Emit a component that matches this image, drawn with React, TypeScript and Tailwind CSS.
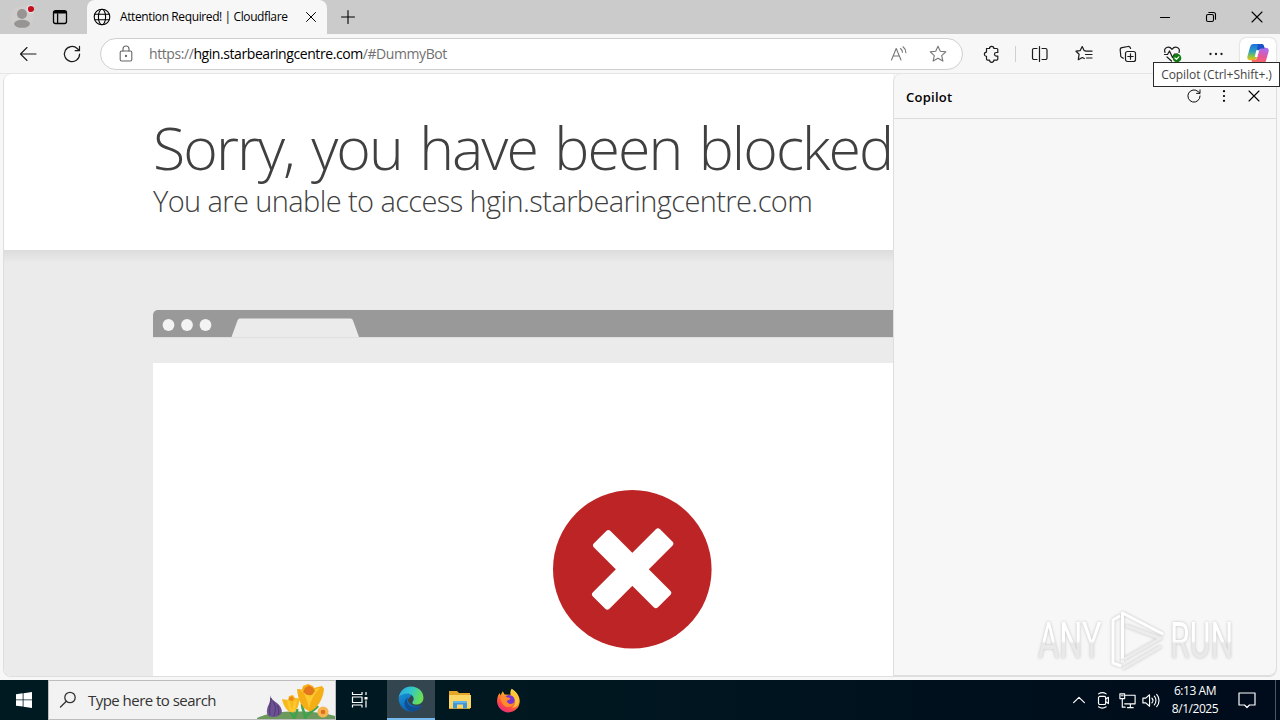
import React from 'react';
import clsx from 'clsx';

type IconProps = {
    size?: number;
    className?: string;
    strokeWidth?: number;
    children: React.ReactNode;
};

// 20 x 20 line icon
const Icon = ({ size = 20, className, strokeWidth = 1.1, children }: IconProps) => (
    <svg
        width={size}
        height={size}
        viewBox="0 0 20 20"
        fill="none"
        stroke="currentColor"
        strokeWidth={strokeWidth}
        strokeLinecap="round"
        strokeLinejoin="round"
        className={clsx('shrink-0', className)}
    >
        {children}
    </svg>
);

const RefreshIcon = ({ size = 20 }: { size?: number }) => (
    <Icon size={size} strokeWidth={1.2}>
        <path d="M17.6 10a7.6 7.6 0 1 1-2.4-5.5L17.4 6.6M17.5 2.4v4.3h-4.3" />
    </Icon>
);

const CloseIcon = ({ size = 20 }: { size?: number }) => (
    <Icon size={size}>
        <path d="M5 5l10 10M15 5L5 15" />
    </Icon>
);

const TabStrip = () => (
    <div className="flex h-[34px] bg-[#cbcbcb] text-black">
        <div className="flex w-[44px] items-center justify-center">
            <svg width="24" height="24" viewBox="0 0 24 24">
                <circle cx="12" cy="12" r="11.5" fill="#d0cecd" />
                <circle cx="12" cy="9" r="5" fill="#979491" />
                <ellipse cx="12" cy="18.8" rx="8" ry="4" fill="#979491" />
                <circle cx="21" cy="4" r="4.6" fill="#dedede" />
                <circle cx="21" cy="4" r="3.1" fill="#c50f1f" />
            </svg>
        </div>
        <div className="flex w-[32px] items-center justify-center">
            <Icon strokeWidth={1.3}>
                <rect x="3.5" y="3.7" width="13" height="12.8" rx="2" />
                <path d="M4.5 5.2h11" strokeWidth={2.4} />
                <path d="M7.6 7v9" />
            </Icon>
        </div>
        <div className="ml-[11px] flex w-[240px] items-center rounded-t-lg bg-[#f7f7f7]">
            <Icon className="ml-[5px]">
                <circle cx="10" cy="10" r="7.8" />
                <ellipse cx="10" cy="10" rx="3.6" ry="7.8" />
                <path d="M2.8 7.2h14.4M2.8 12.8h14.4" />
            </Icon>
            <span className="ml-[8px] w-[182px] text-[12px] tracking-[-0.390px] whitespace-nowrap">Attention Required! | Cloudflare</span>
            <CloseIcon size={18} />
        </div>
        <div className="flex w-[42px] items-center justify-center">
            <Icon>
                <path d="M10 3.5v13M3.5 10h13" />
            </Icon>
        </div>
        <div className="ml-auto flex">
            <div className="flex w-[46px] items-center justify-center">
                <Icon>
                    <path d="M5.5 10.5h9" />
                </Icon>
            </div>
            <div className="flex w-[46px] items-center justify-center">
                <Icon>
                    <rect x="5.5" y="7.5" width="7" height="7" rx="1.5" />
                    <path d="M7.8 5.5h4.7a2 2 0 0 1 2 2v4.7" />
                </Icon>
            </div>
            <div className="flex w-[46px] items-center justify-center">
                <CloseIcon />
            </div>
        </div>
    </div>
);

const CopilotLogo = () => (
    <svg width="24" height="24" viewBox="0 0 24 24">
        <defs>
            <linearGradient id="cpA" x1="0" y1="0" x2="0" y2="1">
                <stop offset="0" stopColor="#1b6fe0" />
                <stop offset="0.45" stopColor="#2f9fc0" />
                <stop offset="0.75" stopColor="#8bc34a" />
                <stop offset="1" stopColor="#f2c10f" />
            </linearGradient>
            <linearGradient id="cpB" x1="0.6" y1="0" x2="0.3" y2="1">
                <stop offset="0" stopColor="#a86cf0" />
                <stop offset="0.5" stopColor="#e8559a" />
                <stop offset="1" stopColor="#ff6d4a" />
            </linearGradient>
        </defs>
        <path d="M7.5 2h8c1.4 0 2 .8 2.4 2l.7 2.5h-3c-1.5 0-2.3.8-2.7 2.2l-1.9 6.6c-.6 2-1.6 3-3.5 3H4.3C2 18.3.8 17 1.4 14.6L4 5.3C4.7 3 5.7 2 7.5 2z" fill="url(#cpA)" />
        <path d="M16.5 22h-8c-1.4 0-2-.8-2.4-2l-.7-2.3h2.9c1.6 0 2.5-.9 2.9-2.3l1.9-6.5c.6-2 1.6-3.1 3.5-3.1h3.1c2.3 0 3.5 1.4 2.9 3.7L20 18.7c-.7 2.3-1.7 3.3-3.5 3.3z" fill="url(#cpB)" />
        <path d="M12 2h3.5c1.4 0 2 .8 2.4 2l.7 2.5h-3c-1.5 0-2.3.8-2.7 2.2L11 7z" fill="#1c50c8" />
        <path d="M10.300 8.200h2.700l-1.800 6.800H8.800z" fill="white" />
    </svg>
);

const Toolbar = () => (
    <div className="flex h-[39px] items-center bg-[#f7f7f7] text-[#1b1b1b]">
        <div className="flex w-[44px] justify-center pl-3">
            <Icon>
                <path d="M18 10H2.5M9 3.5L2.5 10 9 16.5" />
            </Icon>
        </div>
        <div className="flex w-[56px] justify-center">
            <RefreshIcon />
        </div>
        <div className="mt-[1px] flex h-[32px] w-[863px] items-center rounded-full border border-[#cfcfcf] bg-white">
            <Icon className="ml-[15px] text-[#666]">
                <rect x="4.2" y="7" width="11.6" height="10" rx="1.5" />
                <path d="M7 7V5a3 3 0 0 1 6 0v2" />
                <circle cx="10" cy="12" r=".6" fill="currentColor" />
            </Icon>
            <span className="ml-[13px] pb-[1px] text-[14px] tracking-[-0.420px] text-[#717171]">
                https://<span className="text-black">hgin.starbearingcentre.com</span>/#DummyBot
            </span>
            <div className="mr-[14px] ml-auto flex gap-[19px] text-[#777]">
                <Icon>
                    <path d="M2.5 16L7.2 4.5 12 16M4.2 12h6M11.5 4.5c1.2.9 1.9 2.1 2 3.8M14 2.8c1.9 1.5 2.8 3.5 2.9 6" />
                </Icon>
                <Icon>
                    <path d="M10 2.3l2.3 5 5.5.6-4.1 3.7 1.2 5.5L10 14.3l-4.9 2.8 1.2-5.5L2.2 7.9l5.5-.6z" />
                </Icon>
            </div>
        </div>
        <div className="ml-[7px] flex w-[43px] justify-center">
            <Icon strokeWidth={1.2}>
                <path d="M4.5 4.5h3a2.2 2.2 0 0 1 4.4 0h2.9a1 1 0 0 1 1 1v3h-1.5a1.8 1.8 0 0 0 0 3.6h1.5v3a1 1 0 0 1-1 1h-2.9a2.2 2.2 0 0 1-4.4 0H5.500a1 1 0 0 1-1-1v-2.800a2.100 2.100 0 0 1 0-4.200z" />
            </Icon>
        </div>
        <div className="mx-[2px] h-[16px] w-px bg-[#d0d0d0]" />
        <div className="flex w-[44px] justify-center">
            <Icon strokeWidth={1.2}>
                <path d="M9.5 2.5v15M7 4.5H4A1.5 1.5 0 0 0 2.5 6v8A1.5 1.5 0 0 0 4 15.5h3M12 4.5h3.5A1.5 1.5 0 0 1 17 6v8a1.5 1.5 0 0 1-1.500 1.500H12" />
            </Icon>
        </div>
        <div className="flex w-[44px] justify-center">
            <Icon strokeWidth={1.2}>
                <path d="M11.4 6.8L10.1 6.6 8.2 2.5 6.2 6.6 2 7.2l3.1 3-.8 5.5 4-2.2 2 1M12 7.2h6M11.5 10.5H18M12.5 14H18" />
            </Icon>
        </div>
        <div className="flex w-[44px] justify-center">
            <Icon strokeWidth={1.2}>
                <rect x="7.5" y="7.5" width="10" height="10" rx="2" />
                <path d="M12.5 9.8v5.4M9.8 12.5h5.4M5.3 14.3l-1.7-1A2 2 0 0 1 2.7 11L2.2 6A2.2 2.2 0 0 1 4 3.6l6-1.1c1.4-.2 2.3.6 2.6 2" />
            </Icon>
        </div>
        <div className="flex w-[44px] justify-center">
            <Icon strokeWidth={1.2}>
                <path d="M3 8.5C1.2 3.4 7 1.2 10 5.3c3-4.1 8.8-1.9 7 3.2M2.5 10.5h3L7.5 7l3 6.5 2-3.5h3M5 13l4.5 4" />
                <circle cx="15" cy="14" r="4.3" fill="#107c10" stroke="none" />
                <path d="M13 14l1.4 1.4 2.4-2.6" stroke="white" />
            </Icon>
        </div>
        <div className="flex w-[44px] justify-center">
            <Icon>
                <g fill="currentColor" stroke="none">
                    <circle cx="4.5" cy="10" r="1.15" />
                    <circle cx="10" cy="10" r="1.15" />
                    <circle cx="15.5" cy="10" r="1.15" />
                </g>
            </Icon>
        </div>
        <div className="ml-[2px] flex h-[32px] w-[36px] items-center justify-center rounded-md bg-white shadow-[0_0_2px_rgba(0,0,0,0.25)]">
            <CopilotLogo />
        </div>
    </div>
);

const BlockedPage = () => (
    <div className="flex w-[889px] flex-col overflow-hidden rounded-l-lg bg-[#ebebeb]">
        <div className="h-[176px] bg-white pt-[34px] pl-[149px] font-light whitespace-nowrap text-[#404040]">
            <h1 className="h-[78px] text-[59px] leading-[78px] tracking-[-1.950px] [word-spacing:4px]">Sorry, you have been blocked</h1>
            <h2 className="h-[30px] text-[29px] leading-[30px] tracking-[-0.600px]">You are unable to access hgin.starbearingcentre.com</h2>
        </div>
        <div className="h-[13px] shrink-0 bg-linear-to-b from-[#dcdcdc] to-[#ebebeb]" />
        <div className="mt-[47px] ml-[149px] flex h-[27px] shrink-0 rounded-tl-[5px] bg-[#999]">
            <svg width="210" height="27" viewBox="0 0 210 27">
                <circle cx="15.5" cy="15" r="5.9" fill="#f3f3f3" />
                <circle cx="34" cy="15" r="5.9" fill="#f3f3f3" />
                <circle cx="52.5" cy="15" r="5.9" fill="#f3f3f3" />
                <path d="M78.5 27L84.5 10.5Q85.2 8.5 87 8.5H197.5Q199.3 8.5 200 10.5L206 27z" fill="#ebebeb" />
            </svg>
        </div>
        <div className="ml-[149px] h-px shrink-0 bg-[#dfdfdf]" />
        <div className="mt-[25px] ml-[149px] flex-1 bg-white pt-[127px] pl-[400px]">
            <svg width="159" height="159" viewBox="0 0 159 159">
                <circle cx="79.3" cy="79.3" r="79.3" fill="#bd2426" />
                <g transform="translate(79.3 79.3) rotate(45)" fill="white">
                    <rect x="-45.5" y="-11.7" width="90.5" height="23.4" rx="3" />
                    <rect x="-11.7" y="-48" width="23.4" height="95" rx="3" />
                </g>
            </svg>
        </div>
    </div>
);

const Watermark = () => (
    <div className="flex h-[64px] w-[196px] items-center justify-between pt-[2px] text-[50px] leading-none drop-shadow-[0_0_1.500px_rgba(0,0,0,0.22)]">
        <span className="flex w-[66px] items-center">
            <span className="origin-left scale-x-[0.65] bg-linear-to-b from-white from-50% to-[#e9e9e9] to-55% bg-clip-text font-[Roboto] text-transparent">ANY</span>
        </span>
        <svg width="58" height="64" viewBox="0 0 58 64" fill="none" strokeLinejoin="round" strokeLinecap="round" className="shrink-0">
            <path d="M11 7.5L5 11v43l7 2.5M14.5 52V4L54 24.5" stroke="#fff" strokeWidth="3" />
            <path d="M19 17l32 12M14.5 51L53 29M16 59l36-21" stroke="#ececec" strokeWidth="3" />
        </svg>
        <span className="flex w-[64px] items-center">
            <span className="origin-left scale-x-[0.64] bg-linear-to-b from-white from-50% to-[#e9e9e9] to-55% bg-clip-text font-[Roboto] text-transparent">RUN</span>
        </span>
    </div>
);

const CopilotPane = () => (
    <div className="flex w-[384px] flex-col rounded-r-lg rounded-tl-lg border-x border-b border-[#dedede] bg-[#f7f7f7]">
        <div className="flex h-[45px] items-center border-b border-[#dcdcdc] pl-[12px] text-black">
            <span className="pt-[3px] text-[13px] font-semibold tracking-[0.250px]">Copilot</span>
            <div className="ml-auto flex items-center pr-[7px]">
                <div className="flex w-[30px] justify-center"><RefreshIcon size={16} /></div>
                <div className="flex w-[30px] justify-center">
                    <Icon size={16}>
                        <g fill="currentColor" stroke="none">
                            <circle cx="10" cy="4" r="1.4" />
                            <circle cx="10" cy="10" r="1.4" />
                            <circle cx="10" cy="16" r="1.4" />
                        </g>
                    </Icon>
                </div>
                <div className="flex w-[30px] justify-center"><CloseIcon /></div>
            </div>
        </div>
        <div className="mt-auto mb-[3px] ml-[144px]">
            <Watermark />
        </div>
    </div>
);

const Flowers = () => (
    <svg width="78" height="38" viewBox="0 0 78 38" className="ml-auto shrink-0">
        <path d="M-2 38C10 32 22 30.5 40 30.5S68 32 78 35v3z" fill="#6b9a5c" />
        <path d="M37 38c1-4 4-6 3-10M34 31c1 3 3 4 3 7M48 38c0-5 8-7 13-13M45 23c0 6 3 8 3 14" stroke="#3fa34d" strokeWidth="2.6" fill="none" />
        <path d="M13.5 14c0 4 4 6 7 8.5 4 3.5 5.5 8 3.5 10.5-3 3-10 4-13 1.5-2-3-1-8 1-11.5 1.5-3 1-6 1.5-9z" fill="#6d5192" />
        <path d="M14 17c-.5 7-2 11-1 17M16 20c3 5 3 10 1 15M20 24c2 4 2 7 1 10" stroke="#4b3a70" fill="none" />
        <path d="M25 18l6 1 1-4 4-1 2 3 4.5.5c-.5 7-2.5 12-6.5 14-7-1-9.5-7-11-13.5z" fill="#f7b91c" />
        <path d="M30 18.5l3 2 2 9 2-9 3-2-2 11-3 2-3-3z" fill="#fcc92f" />
        <path d="M32 17l3-2 2 3-2 2-3-1z" fill="#ea861f" />
        <path d="M40 8l5 .5 1-3.5 5-2 5 2 1 2 8-2 2 3c-1 10-6 19-14 22.5-9-3-12-12-13-22.5z" fill="#f5ae15" />
        <path d="M43 9c5 3 7 9 9 19 2-9 5-15 11-21-5 0-8 3-10 9-2-4-5-7-10-7z" fill="#fcc92f" />
        <path d="M48 7l4-2.500 4 2.500 2 3-3 4h-5l-4-3z" fill="#e4761b" />
        <circle cx="66" cy="31" r="5.6" fill="#f7b452" />
        <circle cx="66" cy="31" r="2.3" fill="#dd701a" />
    </svg>
);

const EdgeLogo = () => (
    <svg width="26" height="26" viewBox="0 0 24 24">
        <defs>
            <linearGradient id="edgeTop" x1="0" y1="0" x2="1" y2="0.3">
                <stop offset="0" stopColor="#2aa5e8" />
                <stop offset="0.5" stopColor="#30c5ce" />
                <stop offset="1" stopColor="#67df56" />
            </linearGradient>
            <linearGradient id="edgeBody" x1="0" y1="0" x2="0.7" y2="1">
                <stop offset="0" stopColor="#1698dd" />
                <stop offset="1" stopColor="#0b56a8" />
            </linearGradient>
        </defs>
        <path d="M.6 11C.6 18 5.5 23.5 12 23.5c4.5 0 8-2 10-5.3-.5-.6-2 .5-4 .5C13 18.7 9 16 9 12.5L13 8 6 5z" fill="url(#edgeBody)" />
        <path d="M.6 11C1.5 4.5 6.3.5 12 .5c6.8 0 11.5 4.7 11.5 10.3 0 4-3 6.3-6.3 6.3-2.6 0-4-.8-4-1.7 0-.8 1.3-1.4 1.3-3.4 0-2.7-2.7-5-6.2-5C5 7 2 8.5.6 11z" fill="url(#edgeTop)" />
        <path d="M9 10.5c-2.5 6 2.5 11.5 13 7.7-3.2 5.3-10 6.5-13.5 3-3.5-3.5-3-8.2.5-10.7z" fill="#124c91" />
    </svg>
);

const FolderIcon = () => (
    <svg width="24" height="22" viewBox="0 0 24 22">
        <path d="M1 3.5V2h8l2 2h11v16H1z" fill="#e6a629" />
        <path d="M1 6h22v13H1z" fill="#fbd665" />
        <path d="M5 19.5v-7.500h14v7.500h-4v-4H9v4z" fill="#3f97d9" />
        <path d="M5 12h14v2H5z" fill="#62b5e8" />
    </svg>
);

const FirefoxLogo = () => (
    <svg width="25" height="25" viewBox="0 0 24 24">
        <defs>
            <linearGradient id="fox" x1="0.8" y1="0" x2="0.25" y2="1">
                <stop offset="0" stopColor="#fff04a" />
                <stop offset="0.4" stopColor="#ffa02c" />
                <stop offset="0.7" stopColor="#ff4b43" />
                <stop offset="1" stopColor="#e62a82" />
            </linearGradient>
        </defs>
        <path d="M15 .8c4 2.5 7.8 6.5 7.8 11.9A11 11 0 0 1 12 23.5 11 11 0 0 1 1 12.5C1 9 2.2 6.5 3.5 4.8l.7 2.4L6.5 3l1.7 3.2 5.8.3c-.5-2.2-.2-4 1-5.7z" fill="url(#fox)" />
        <circle cx="12.5" cy="12" r="5.4" fill="#7a35cf" />
        <path d="M4.5 8.5c3-2 5-.8 6.3.7l3 .3c-.4 2-2.4 2-3.4 3 1 3.3 4.5 3.5 7.1 1.5-1 4.5-7.5 6-10.800 1.800C4.700 13.200 4.300 10.700 4.500 8.500z" fill="#ff8b2b" />
        <path d="M16.5 8c3 3 3 8.5-1 11 5-.8 6.500-4 6.300-8-.5-4-3-6.500-6.300-8.500-.6 2 .2 4 1 5.500z" fill="#ffc33a" />
    </svg>
);

const Taskbar = () => (
    <div className="flex h-[40px] bg-linear-to-r from-[#001a22] via-[#001720] via-45% to-[#000b1b] text-white">
        <div className="flex w-[48px] items-center justify-center">
            <svg width="16" height="16" viewBox="0 0 16 16" fill="white">
                <path d="M0 2.2L6.7 1.3V7.5H0zM7.5 1.2L16 0v7.5H7.5zM0 8.3h6.7v6.3L0 13.7zM7.5 8.3H16V16l-8.5-1.2z" />
            </svg>
        </div>
        <div className="flex w-[288px] items-center border border-[#bdbdbd] bg-[#f2f2f2] text-[#333]">
            <Icon className="ml-[9px]" strokeWidth={1.3}>
                <circle cx="12" cy="7.5" r="5.2" />
                <path d="M8.3 11.3L2.5 17" />
            </Icon>
            <span className="ml-[10px] text-[15px] tracking-[-0.530px] whitespace-nowrap">Type here to search</span>
            <Flowers />
        </div>
        <div className="flex w-[48px] items-center justify-center">
            <Icon strokeWidth={1.2}>
                <path d="M2.5 2v2.5h9.500V2M2.500 17.500V15h9.500v2.500M2.500 7h9.500v5.500H2.500zM16 2v3M16 10.500v7" strokeLinecap="butt" />
                <path d="M14.5 7h3v2.5h-3z" fill="currentColor" stroke="none" />
            </Icon>
        </div>
        <div className="ml-[3px] flex w-[48px] items-center justify-center border-b-2 border-[#76b9ed] bg-[#334650]">
            <EdgeLogo />
        </div>
        <div className="flex w-[49px] items-center justify-center"><FolderIcon /></div>
        <div className="flex w-[49px] items-center justify-center"><FirefoxLogo /></div>
        <div className="ml-auto flex items-center">
            <Icon size={18} className="mr-[6px]" strokeWidth={1.3}>
                <path d="M4 13l6-6 6 6" />
            </Icon>
            <Icon size={18} className="mr-[6px]" strokeWidth={1.3}>
                <rect x="5" y="6" width="8" height="9" rx="1.5" />
                <path d="M13 9l3-2v7l-3-2M5 3.2c2.5-1.7 6-1.7 8.5 0M5 17.5c2.5 1.7 6 1.7 8.5 0" />
            </Icon>
            <Icon size={19} className="mr-[4px]" strokeWidth={1.2}>
                <path d="M8 4.5h10v9H7M10 17.5h6M13 13.5v4M2 3h5v5H2zM4.5 8v9h3M3.5 5h2" />
            </Icon>
            <Icon size={19} className="mr-[1px]" strokeWidth={1.2}>
                <path d="M2 7.5h3L9 4v12l-4-3.5H2zM11.5 7.5c1.3 1.5 1.3 3.5 0 5M14 5.5c2.3 2.5 2.3 6.5 0 9M16.5 3.5c3.3 3.5 3.3 9.5 0 13" />
            </Icon>
            <div className="flex h-[40px] w-[68px] flex-col items-center pt-[2px] text-[12px] leading-[18px] tracking-[-0.450px]">
                <span>6:13 AM</span>
                <span>8/1/2025</span>
            </div>
            <div className="flex w-[36px] justify-center">
                <Icon strokeWidth={1.2}>
                    <path d="M2 3h16v12h-5.5l-2.5 2.5L7.5 15H2z" />
                </Icon>
            </div>
            <div className="ml-[10px] h-[40px] w-[5px] border-l border-[#4c5562]" />
        </div>
    </div>
);

const App = () => {
    return (
        <div className="relative flex h-[720px] w-[1280px] flex-col overflow-hidden bg-[#f7f7f7] font-['Open_Sans','Noto_Sans',sans-serif]">
            <TabStrip />
            <Toolbar />
            <div className="flex h-[604px] border-t border-[#e5e5e5] px-[3px]">
                <div className="flex flex-1 rounded-lg border-b border-l border-[#dedede]">
                    <BlockedPage />
                    <CopilotPane />
                </div>
            </div>
            <div className="h-[3px]" />
            <Taskbar />
            {/* tooltip */}
            <div className="absolute top-[62px] left-[1153px] flex h-[25px] w-[127px] items-center justify-center border border-[#2b2b2b] bg-white text-[12px] tracking-[-0.050px] whitespace-nowrap text-[#444]">
                Copilot (Ctrl+Shift+.)
            </div>
        </div>
    );
};

export default App;
